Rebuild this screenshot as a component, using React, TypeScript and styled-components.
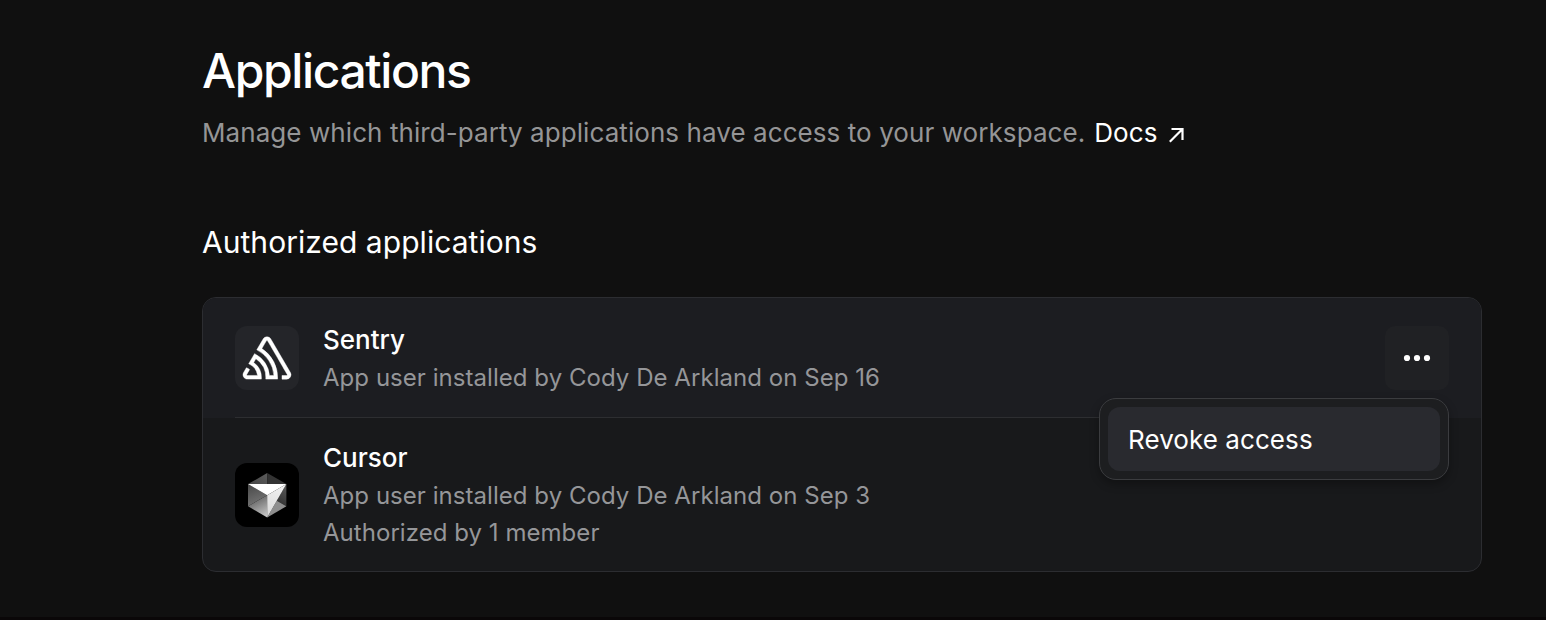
import React from "react";
import styled, { createGlobalStyle } from "styled-components";
import { SiSentry } from "react-icons/si";

const GlobalStyle = createGlobalStyle`
  * { box-sizing: border-box; }
  html, body { margin: 0; background: #101010; }
  body {
    font-family: Inter, "Liberation Sans", sans-serif;
    color: #fff;
    overflow: hidden;
    -webkit-font-smoothing: antialiased;
  }
`;

const Page = styled.main`
  height: 620px;
  padding: 42px 64px 0 202px;
  border-bottom: 3px solid #0a0708;
`;

const Title = styled.h1`
  margin: 0;
  font-size: 48px;
  line-height: 58px;
  font-weight: 500;
  letter-spacing: -1.38px;
`;

const Intro = styled.p`
  display: flex;
  align-items: center;
  gap: 9px;
  margin: 15px 0 0;
  font-size: 26px;
  line-height: 36px;
  letter-spacing: 0.072px;
  color: #959596;
`;

const DocsLink = styled.a`
  display: inline-flex;
  align-items: center;
  gap: 10px;
  color: #fff;
`;

const SectionTitle = styled.h2`
  margin: 72px 0 0;
  font-size: 30px;
  line-height: 38px;
  font-weight: 400;
  letter-spacing: 0.04px;
`;

const Card = styled.section`
  margin-top: 36px;
  height: 275px;
  border: 1px solid #2c2d31;
  border-radius: 14px;
  background: #18191b;
`;

const Row = styled.div<{ $active?: boolean }>`
  position: relative;
  display: flex;
  align-items: center;
  height: ${(p) => (p.$active ? 120 : 153)}px;
  padding: 0 32px;
  background: ${(p) => (p.$active ? "#1c1d21" : "transparent")};
  border-radius: ${(p) => (p.$active ? "13px 13px 0 0" : "0")};
`;

const Divider = styled.div`
  height: 1px;
  margin: -1px 32px 0;
  background: #2d2e31;
  position: relative;
`;

const AppIcon = styled.div<{ $bg: string }>`
  display: flex;
  align-items: center;
  justify-content: center;
  width: 64px;
  height: 64px;
  border-radius: 12px;
  background: ${(p) => p.$bg};
`;

const SentryIcon = styled(SiSentry)`
  width: 48px;
  height: 48px;
  stroke: #fff;
  stroke-width: 0.22;
  overflow: visible;
`;

const Details = styled.div`
  flex: 1;
  margin-left: 24px;
`;

const AppName = styled.div`
  font-size: 26px;
  line-height: 38px;
  font-weight: 500;
`;

const Meta = styled.div`
  font-size: 24px;
  line-height: 37px;
  letter-spacing: 0.045px;
  color: #959699;
`;

const MoreButton = styled.button`
  display: flex;
  align-items: center;
  justify-content: center;
  width: 64px;
  height: 64px;
  padding: 0;
  border: 0;
  border-radius: 10px;
  background: #202124;
`;

const Menu = styled.div`
  position: absolute;
  z-index: 2;
  top: 100px;
  right: 32px;
  width: 350px;
  height: 82px;
  padding: 8px;
  border: 1px solid #3b3c3f;
  border-radius: 17px;
  background: #1d1e20;
  box-shadow: 0 4px 10px rgba(0, 0, 0, 0.3);
`;

const MenuItem = styled.div`
  height: 64px;
  padding: 0 20px;
  border-radius: 12px;
  background: #292a2f;
  font-size: 26px;
  line-height: 65px;
  letter-spacing: 0.07px;
`;

const Arrow = styled.svg`
  margin-top: 3px;
`;

const ArrowIcon = () => (
  <Arrow width="16" height="16" viewBox="0 0 16 16" fill="none" stroke="#fff" strokeWidth="2.2">
    <path d="M3.5 2H14.5V13M14.5 2L1.8 14.7" />
  </Arrow>
);

const DotsIcon = () => (
  <svg width="28" height="8" viewBox="0 0 28 8" fill="#fff">
    <circle cx="4" cy="4" r="3.1" />
    <circle cx="14" cy="4" r="3.1" />
    <circle cx="24" cy="4" r="3.1" />
  </svg>
);

const CursorIcon = () => (
  <svg width="64" height="64" viewBox="0 0 64 64">
    <defs>
      <linearGradient id="top-left" x1="32" y1="12" x2="20" y2="24" gradientUnits="userSpaceOnUse">
        <stop stopColor="#5a5a5a" />
        <stop offset="1" stopColor="#484848" />
      </linearGradient>
      <linearGradient id="left" x1="14" y1="21" x2="22" y2="40" gradientUnits="userSpaceOnUse">
        <stop stopColor="#484848" />
        <stop offset="1" stopColor="#707070" />
      </linearGradient>
      <linearGradient id="bottom" x1="22" y1="38" x2="30" y2="53" gradientUnits="userSpaceOnUse">
        <stop stopColor="#747474" />
        <stop offset="1" stopColor="#c4c4c4" />
      </linearGradient>
      <linearGradient id="right" x1="51" y1="21" x2="42" y2="42" gradientUnits="userSpaceOnUse">
        <stop stopColor="#5c5c5c" />
        <stop offset="1" stopColor="#303030" />
      </linearGradient>
      <linearGradient id="front" x1="46" y1="24" x2="32" y2="54" gradientUnits="userSpaceOnUse">
        <stop stopColor="#f0f0f0" />
        <stop offset="1" stopColor="#d8d8d8" />
      </linearGradient>
    </defs>
    <path d="M32.2 10L13 21.1H32.2Z" fill="url(#top-left)" />
    <path d="M32.2 10L51.4 21.1H32.2Z" fill="#333" />
    <path d="M13 21.1V43.3L32.2 32.2Z" fill="url(#left)" />
    <path d="M13 43.3L32.2 32.2V54.4Z" fill="url(#bottom)" />
    <path d="M51.4 21.1V43.3L41.8 37.7Z" fill="url(#right)" />
    <path d="M51.4 43.3L32.2 54.4L41.8 37.7Z" fill="#8e8e8e" />
    <path d="M13 21.1H51.4L32.2 32.2Z" fill="#fff" />
    <path d="M51.4 21.1L32.2 54.4V32.2Z" fill="url(#front)" />
  </svg>
);

export default function App() {
  return (
    <>
      <GlobalStyle />
      <Page>
        <Title>Applications</Title>
        <Intro>
          <span>Manage which third-party applications have access to your workspace.</span>
          <DocsLink>
            Docs <ArrowIcon />
          </DocsLink>
        </Intro>
        <SectionTitle>Authorized applications</SectionTitle>
        <Card>
          <Row $active>
            <AppIcon $bg="#242529">
              <SentryIcon />
            </AppIcon>
            <Details>
              <AppName>Sentry</AppName>
              <Meta>App user installed by Cody De Arkland on Sep 16</Meta>
            </Details>
            <MoreButton aria-label="More options">
              <DotsIcon />
            </MoreButton>
            <Menu>
              <MenuItem>Revoke access</MenuItem>
            </Menu>
          </Row>
          <Divider />
          <Row>
            <AppIcon $bg="#000">
              <CursorIcon />
            </AppIcon>
            <Details>
              <AppName>Cursor</AppName>
              <Meta>App user installed by Cody De Arkland on Sep 3</Meta>
              <Meta>Authorized by 1 member</Meta>
            </Details>
          </Row>
        </Card>
      </Page>
    </>
  );
}
